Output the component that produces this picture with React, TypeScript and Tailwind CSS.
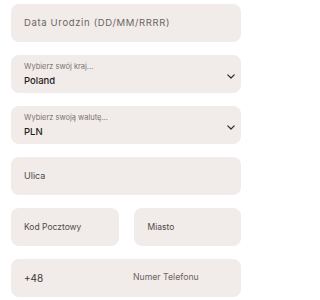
import React from "react";

const Chevron = () => (
  <svg width="8" height="5" viewBox="0 0 8 5" fill="none" className="shrink-0 mt-[4px]">
    <path d="M0.8 0.8 L4 4 L7.2 0.8" stroke="#2e2a29" strokeWidth="1.2" strokeLinecap="round" strokeLinejoin="round" />
  </svg>
);

export default function App() {
  const box = "h-[38px] rounded-[8px] bg-[#f1ecea] flex items-center pl-[13px]";
  return (
    <div className="w-[246px] h-[300px] bg-white pt-[4px] pl-[11px] pr-[5px] flex flex-col gap-[13px]" style={{ fontFamily: "Inter, 'Open Sans', sans-serif" }}>
      <div className={box}>
        <span className="text-[9.5px] tracking-[0.65px] text-[#6b6462]">Data Urodzin (DD/MM/RRRR)</span>
      </div>
      <div className={box + " justify-between pr-[6px]"}>
        <div className="flex flex-col leading-none">
          <span className="text-[7.5px] text-[#7a7370]">Wybierz swój kraj...</span>
          <span className="text-[9.5px] font-medium text-[#1f1b1a] mt-[5px]">Poland</span>
        </div>
        <Chevron />
      </div>
      <div className={box + " justify-between pr-[6px]"}>
        <div className="flex flex-col leading-none">
          <span className="text-[7.5px] text-[#7a7370]">Wybierz swoją walutę...</span>
          <span className="text-[9.5px] font-medium text-[#1f1b1a] mt-[5px]">PLN</span>
        </div>
        <Chevron />
      </div>
      <div className={box}>
        <span className="text-[9px] text-[#4f4947]">Ulica</span>
      </div>
      <div className="grid grid-cols-2 gap-[15px]">
        <div className={box}>
          <span className="text-[8.5px] text-[#4f4947]">Kod Pocztowy</span>
        </div>
        <div className="h-[38px] rounded-[8px] bg-[#f1ecea] flex items-center pl-[14px]">
          <span className="text-[8.5px] text-[#4f4947]">Miasto</span>
        </div>
      </div>
      <div className={box}>
        <span className="w-[109px] text-[10px] text-[#3a3534]">+48</span>
        <span className="text-[8.7px] text-[#6b6462]">Numer Telefonu</span>
      </div>
    </div>
  );
}
